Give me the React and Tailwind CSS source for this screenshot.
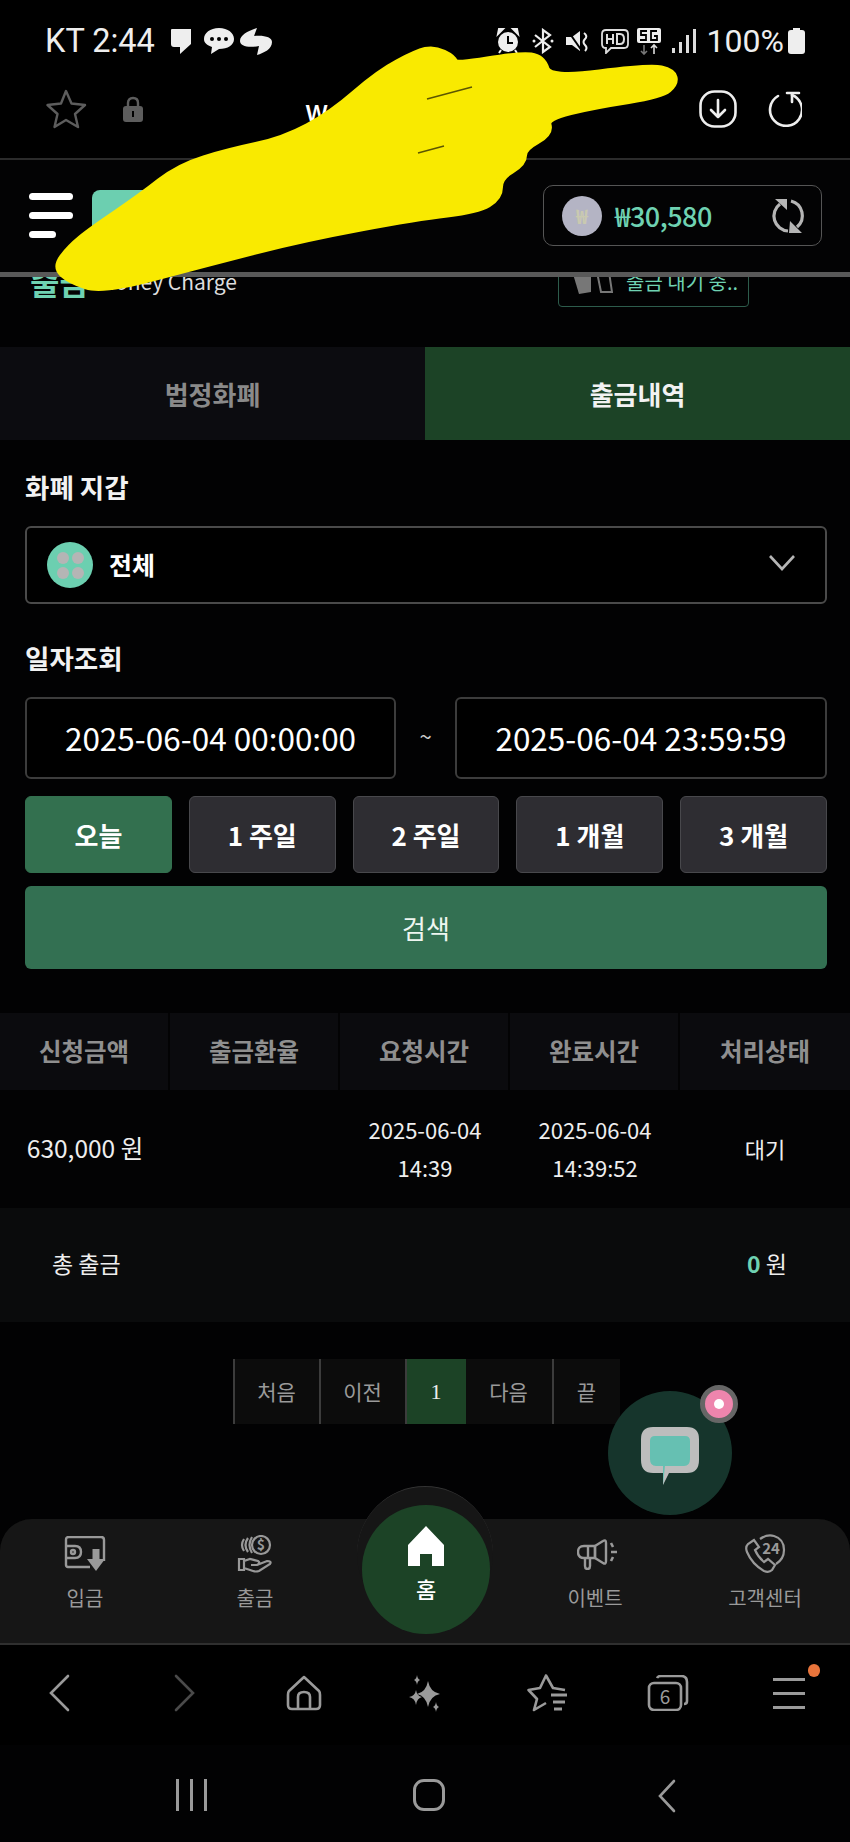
import React from 'react';

const outline = [
  [434, 49], [453, 58], [455, 66], [520, 55], [542, 58], [549, 80], [650, 67], [672, 72], [675, 83], [661, 95],
  [596, 105], [545, 117], [550, 133], [523, 148], [523, 163], [499, 177], [499, 197], [477, 210], [417, 217],
  [304, 238], [206, 263], [103, 291], [70, 280], [56, 267], [70, 248], [92, 230], [141, 197], [179, 167],
  [228, 152], [284, 140], [332, 114], [379, 73], [417, 53],
];

// rounds the marker outline off through the midpoints
const mid = (a, b) => [(a[0] + b[0]) / 2, (a[1] + b[1]) / 2];
const scribble =
  `M${mid(outline[outline.length - 1], outline[0]).join(' ')} ` +
  outline.map((p, i) => `Q${p.join(' ')} ${mid(p, outline[(i + 1) % outline.length]).join(' ')}`).join(' ') +
  ' Z';

const ranges = ['오늘', '1 주일', '2 주일', '1 개월', '3 개월'];
const columns = ['신청금액', '출금환율', '요청시간', '완료시간', '처리상태'];

function StatusIcons() {
  return (
    <div className="flex items-center">
      <svg width="24" height="26" viewBox="0 0 24 26" fill="#eee">
        <circle cx="12" cy="14" r="10" />
        <path d="M2 6 L7 1 L3 1 Z M22 6 L17 1 L21 1 Z" stroke="#eee" strokeWidth="2" />
        <path d="M12 8 V15 H17" stroke="#000" strokeWidth="2" fill="none" />
        <path d="M5 22 L3 25 M19 22 L21 25" stroke="#eee" strokeWidth="2" />
      </svg>
      <svg width="22" height="26" viewBox="0 0 22 26" className="ml-[12px]" fill="none" stroke="#eee" strokeWidth="2.2">
        <path d="M3 7 L18 19 L11 24 V2 L18 7 L3 19" />
        <circle cx="2" cy="13" r="1.5" fill="#eee" stroke="none" />
        <circle cx="20" cy="13" r="1.5" fill="#eee" stroke="none" />
      </svg>
      <svg width="24" height="26" viewBox="0 0 24 26" className="ml-[11px]" fill="#eee">
        <path d="M1 9 H7 L15 3 V23 L7 17 H1 Z" />
        <path d="M3 3 L17 23" stroke="#000" strokeWidth="2" />
        <path d="M19 5 Q23 8 20 11 Q17 14 20 17 Q23 20 20 23" stroke="#eee" strokeWidth="2" fill="none" />
      </svg>
      <svg width="28" height="26" viewBox="0 0 28 26" className="ml-[12px]" fill="none" stroke="#ddd" strokeWidth="1.8">
        <path d="M5 2 H23 Q27 2 27 6 V16 Q27 20 23 20 H10 L5 25 V20 Q1 20 1 16 V6 Q1 2 5 2 Z" />
        <path d="M6 6 V16 M12 6 V16 M6 11 H12 M16 6 V16 H19 Q23 16 23 11 Q23 6 19 6 Z" strokeWidth="2" />
      </svg>
      <div className="ml-[8px] flex w-[24px] flex-col items-center">
        <svg width="24" height="27" viewBox="0 0 24 27" fill="none">
          <rect x="0" y="0" width="24" height="15" rx="2" fill="#eee" />
          <path d="M10 3 H4 V7 H9 V12 H3 M20 3 H14 V12 H20 V8 H17" stroke="#000" strokeWidth="1.8" />
          <path d="M7 17 V26 M4 23 L7 26 L10 23" stroke="#777" strokeWidth="1.6" />
          <path d="M17 26 V17 M14 20 L17 17 L20 20" stroke="#ddd" strokeWidth="1.6" />
        </svg>
      </div>
      <svg width="24" height="26" viewBox="0 0 24 26" className="ml-[11px]" fill="#ddd">
        <rect x="0" y="20" width="3" height="5" />
        <rect x="7" y="14" width="3" height="11" />
        <rect x="14" y="7" width="3" height="18" />
        <rect x="21" y="1" width="3" height="24" />
      </svg>
      <span className="ml-[11px] text-[32px] leading-none text-[#eee]">100%</span>
      <svg width="17" height="26" viewBox="0 0 17 26" className="ml-[4px]" fill="#eee">
        <rect x="5" y="0" width="7" height="3" />
        <rect x="0" y="2" width="17" height="24" rx="3" />
      </svg>
    </div>
  );
}

function Wallet() {
  return (
    <svg width="42" height="36" viewBox="0 0 42 36" fill="none" stroke="#999" strokeWidth="2.4">
      <path d="M26 31 H4 Q2 31 2 29 V4 Q2 1 5 1 H37 Q40 1 40 4 V25" />
      <path d="M2 10 H11 Q17 10 17 16 Q17 22 11 22 H2" />
      <circle cx="9" cy="16" r="2" />
      <path d="M32 13 V24" strokeWidth="7" />
      <path d="M23 23 H41 L32 35 Z" fill="#999" stroke="none" />
    </svg>
  );
}

function CoinsHand() {
  return (
    <svg width="36" height="38" viewBox="0 0 36 38" fill="none" stroke="#999" strokeWidth="2.2">
      <circle cx="24" cy="10" r="9" />
      <path d="M15 2 Q10 10 15 18 M11 3 Q6 10 11 17 M7 4 Q3 10 7 16" />
      <text x="24" y="15" textAnchor="middle" fontSize="14" fontWeight="700" fill="#999" stroke="none">$</text>
      <path d="M2 24 H7 V35 H2 Z M7 26 L13 24 L21 26 Q24 28 20 30 H14 M20 30 L30 26 Q35 26 33 29 L22 36 Q19 37 16 36 L7 33" />
    </svg>
  );
}

function Speaker() {
  return (
    <svg width="40" height="32" viewBox="0 0 40 32" className="ml-[3px]" fill="none" stroke="#999" strokeWidth="2.4" strokeLinejoin="round">
      <path d="M18 8 L26 3 Q29 1 29 5 V23 Q29 27 26 25 L18 20 Z" />
      <path d="M18 8 H7 Q1 8 1 14 Q1 20 7 20 H18 Z" />
      <path d="M11 8 V20" />
      <path d="M8 20 V28 Q8 31 10.5 31 Q13 31 13 28 V20" />
      <path d="M34 5 L36 9 M34 14 H40 M34 23 L36 19" strokeWidth="2.6" />
    </svg>
  );
}

function Phone24() {
  return (
    <svg width="42" height="40" viewBox="0 0 42 40" fill="none" stroke="#999" strokeWidth="2.2">
      <path d="M10 6 L4 10 Q1 13 3 18 Q8 30 20 37 Q25 39 28 36 L31 31 L24 25 L20 28 Q14 23 11 16 L15 13 Z" />
      <path d="M16 5 Q23 0 30 2 Q40 5 40 16 Q40 25 32 30" />
      <text x="27" y="20" textAnchor="middle" fontSize="15" fontWeight="700" fill="#999" stroke="none">24</text>
    </svg>
  );
}

function NavItem({ icon, label }) {
  return (
    <div className="flex flex-col items-center">
      <div className="flex h-[40px] items-center">{icon}</div>
      <span className="mt-[9px] text-[20px] leading-[30px] text-[#9a9a9a]">{label}</span>
    </div>
  );
}

export default function App() {
  return (
    <div className="relative h-[1842px] w-[850px] overflow-hidden bg-[#020203] font-['Noto_Sans_CJK_KR','Noto_Sans',sans-serif] text-white">
      {/* phone status bar */}
      <div className="flex h-[56px] items-center justify-between bg-black pl-[45px] pr-[45px] pt-[26px] font-['Roboto',sans-serif]">
        <div className="flex items-center text-[32.5px] leading-[36px] text-[#eee]">
          <span>KT 2:44</span>
          <svg width="20" height="25" viewBox="0 0 20 25" className="ml-[16px]" fill="#eee">
            <path d="M1 0 H20 V15 L9 25 V18 H3 Q0 18 0 15 V1 Q0 0 1 0 Z" />
          </svg>
          <svg width="30" height="26" viewBox="0 0 30 26" className="ml-[13px]">
            <path d="M15 0 C24 0 30 5 30 11 C30 17 24 21 15 21 L7 26 L8 19 C3 17 0 15 0 11 C0 5 6 0 15 0 Z" fill="#eee" />
            <circle cx="8" cy="11" r="2" fill="#000" />
            <circle cx="15" cy="11" r="2" fill="#000" />
            <circle cx="22" cy="11" r="2" fill="#000" />
          </svg>
          <svg width="32" height="27" viewBox="0 0 32 27" className="ml-[6px]" fill="#eee">
            <path d="M17 0 L14 8 C24 7 32 9 32 14 C32 21 24 25 17 27 L19 18 C8 20 0 18 0 13 C0 7 8 3 17 0 Z" />
          </svg>
        </div>
        <StatusIcons />
      </div>

      {/* browser address bar */}
      <div className="relative flex h-[104px] items-center justify-between border-b-2 border-[#2b2b2b] bg-black pl-[46px] pr-[48px] pt-[4px]">
        <div className="flex items-center">
          <svg width="41" height="40" viewBox="0 0 41 40" fill="none" stroke="#5d5d5d" strokeWidth="2.4" strokeLinejoin="round">
            <path d="M20 2 L25.5 14.5 L39 16 L29 25 L32 38 L20 31 L8.5 38 L11.5 25 L1.5 16 L15 14.5 Z" />
          </svg>
          <svg width="20" height="26" viewBox="0 0 20 26" className="ml-[36px]" fill="#5d5d5d">
            <path d="M5 11 V7 Q5 2 10 2 Q15 2 15 7 V11" fill="none" stroke="#5d5d5d" strokeWidth="2.4" />
            <rect x="0" y="10" width="20" height="16" rx="3" />
            <rect x="9" y="15" width="2" height="6" fill="#000" />
          </svg>
          <span className="ml-[162px] text-[28px] font-medium leading-none">w</span>
        </div>
        <div className="flex items-center gap-[29px]">
          <svg width="38" height="38" viewBox="0 0 38 38" fill="none" stroke="#eee" strokeWidth="2.6" strokeLinecap="round" strokeLinejoin="round">
            <rect x="1.5" y="1.5" width="35" height="35" rx="14" />
            <path d="M19 10 V27 M12 20 L19 27 L26 20" />
          </svg>
          <svg width="36" height="36" viewBox="0 0 36 36" fill="none" stroke="#eee" strokeWidth="2.6" strokeLinecap="round" strokeLinejoin="round">
            <path d="M12 5 A16 16 0 1 0 26 4" />
            <path d="M21 2 H33 M26 2 L26 11" />
          </svg>
        </div>
      </div>

      {/* site header */}
      <div className="relative z-10 flex h-[117px] items-start justify-between border-b-[5px] border-[#595959] bg-[#030304] pl-[29px] pr-[28px] pt-[25px]">
        <div className="flex">
          <div className="mt-[8px] flex w-[44px] flex-col gap-[12px]">
            <div className="h-[7px] w-[44px] rounded-full bg-white" />
            <div className="h-[7px] w-[44px] rounded-full bg-white" />
            <div className="h-[7px] w-[27px] rounded-full bg-white" />
          </div>
          <div className="ml-[19px] mt-[5px] h-[60px] w-[60px] rounded-[8px] bg-[#6ccfb0]" />
        </div>
        <div className="flex h-[61px] w-[279px] items-center rounded-[10px] border border-[#555] pl-[18px] pr-[15px]">
          <div className="flex h-[40px] w-[40px] items-center justify-center rounded-full bg-[#b4b4c4] text-[20px] font-bold text-[#c9c9b0]">₩</div>
          <span className="ml-[13px] text-[27px] font-medium leading-none tracking-[-0.5px] text-[#6fd2b2]">₩30,580</span>
          <svg width="36" height="36" viewBox="0 0 36 36" className="ml-auto" fill="none" stroke="#b5b5b5" strokeWidth="3.2">
            <path d="M10 6 A15 15 0 0 0 18 33" />
            <path d="M21 3 A15 15 0 0 1 27 29" />
            <path d="M5 1 H17 V12 Z M19 35 H32 L20 23 Z" fill="#b5b5b5" stroke="none" />
          </svg>
        </div>
      </div>

      {/* page title, the header covers the top of it */}
      <div className="h-[70px] overflow-hidden">
        <div className="-mt-[16px] flex items-start justify-between pl-[30px] pr-[101px]">
          <div className="flex items-center leading-[40px]">
            <span className="text-[32px] font-bold text-[#6fd2b2]">출금</span>
            <span className="ml-[9px] text-[21px] text-[#ddd]">Money Charge</span>
          </div>
          <div className="-mt-[4px] flex h-[50px] w-[191px] items-center rounded-[4px] border border-[#2d5c4c] pl-[12px]">
            <svg width="42" height="24" viewBox="0 0 42 24" fill="#777">
              <path d="M2 4 L20 0 V22 L8 24 Z" />
              <path d="M26 2 H38 L41 22 H30 Z" fill="none" stroke="#777" strokeWidth="2" />
            </svg>
            <span className="ml-[13px] whitespace-nowrap text-[20px] text-[#6fd2b2]">출금 내기 중..</span>
          </div>
        </div>
      </div>

      {/* tabs */}
      <div className="grid h-[93px] grid-cols-2">
        <div className="flex items-center justify-center bg-[#0c0c10] text-[26px] font-bold text-[#8a8a8a]">법정화폐</div>
        <div className="flex items-center justify-center bg-[#1c4326] text-[26px] font-bold text-[#f2f2f2]">출금내역</div>
      </div>

      {/* filter */}
      <div className="pl-[25px] pr-[23px] pt-[32px]">
        <div className="text-[26.5px] font-bold leading-[30px] text-[#f2f2f2]">화폐 지갑</div>
        <div className="mt-[24px] flex h-[78px] items-center justify-between rounded-[6px] border-2 border-[#4a4a4a] bg-black pl-[20px] pr-[30px]">
          <div className="flex items-center">
            <div className="grid h-[46px] w-[46px] grid-cols-2 content-center justify-center gap-[3px] rounded-full bg-[#6ccfb0] px-[10px]">
              <div className="h-[12px] w-[12px] rounded-full bg-[#b5b5b5]" />
              <div className="h-[12px] w-[12px] rounded-full bg-[#b5b5b5]" />
              <div className="h-[12px] w-[12px] rounded-full bg-[#b5b5b5]" />
              <div className="h-[12px] w-[12px] rounded-full bg-[#b5b5b5]" />
            </div>
            <span className="ml-[16px] text-[25px] font-bold">전체</span>
          </div>
          <svg width="26" height="16" viewBox="0 0 26 16" fill="none" stroke="#b5b5b5" strokeWidth="2.6" className="-mt-[4px]">
            <path d="M1 1 L13 14 L25 1" />
          </svg>
        </div>

        <div className="mt-[39px] text-[26.5px] font-bold leading-[30px] text-[#f2f2f2]">일자조회</div>
        <div className="mt-[24px] flex items-center justify-between">
          <div className="flex h-[82px] w-[371px] items-center justify-center rounded-[6px] border-2 border-[#3c3c3c] bg-black text-[31.5px]">2025-06-04 00:00:00</div>
          <span className="-mt-[6px] text-[22px] text-[#ccc]">~</span>
          <div className="flex h-[82px] w-[372px] items-center justify-center rounded-[6px] border-2 border-[#3c3c3c] bg-black text-[31.5px]">2025-06-04 23:59:59</div>
        </div>

        <div className="mt-[17px] grid grid-cols-5 gap-[17px]">
          {ranges.map((r, i) => (
            <div
              key={r}
              className={`flex h-[77px] items-center justify-center rounded-[6px] border text-[26px] font-bold ${
                i === 0 ? 'border-[#33704f] bg-[#33704f]' : 'border-[#48484c] bg-[#2e2d32]'
              }`}
            >
              {r}
            </div>
          ))}
        </div>

        <div className="mt-[13px] flex h-[83px] items-center justify-center rounded-[6px] bg-[#337052] text-[26px] text-[#eef5f0]">검색</div>
      </div>

      {/* history table */}
      <div className="mt-[44px]">
        <div className="grid h-[77px] grid-cols-5 divide-x-2 divide-[#030304] bg-[#0b0b0e]">
          {columns.map((c) => (
            <div key={c} className="flex items-center justify-center text-[24.5px] font-bold text-[#8f8f8f]">{c}</div>
          ))}
        </div>
        <div className="grid h-[118px] grid-cols-5 items-center bg-[#030304] pb-[2px] text-center text-[22px] leading-[38px] text-[#eee]">
          <div className="text-[24.5px]">630,000 원</div>
          <div />
          <div>2025-06-04<br />14:39</div>
          <div>2025-06-04<br />14:39:52</div>
          <div>대기</div>
        </div>
        <div className="flex h-[114px] items-center justify-between bg-[#0a0b0c] pb-[3px] pl-[52px] pr-[63px] text-[23px] text-[#eee]">
          <span>총 출금</span>
          <span><span className="font-bold text-[#6fd2b2]">0</span> 원</span>
        </div>
      </div>

      {/* pagination */}
      <div className="mt-[37px] flex h-[65px] justify-center pl-[2px] text-[21px] text-[#9a9a9a]">
        <div className="flex w-[86px] items-center justify-center border-l-2 border-[#3c3c3c] bg-[#0c0c0c]">처음</div>
        <div className="flex w-[86px] items-center justify-center border-l-2 border-[#3c3c3c] bg-[#0c0c0c]">이전</div>
        <div className="flex w-[61px] items-center justify-center border-l-2 border-[#3c3c3c] bg-[#1c4326] font-['Liberation_Serif',serif] text-[22px] text-[#eee]">1</div>
        <div className="flex w-[86px] items-center justify-center bg-[#0c0c0c]">다음</div>
        <div className="flex w-[68px] items-center justify-center border-l-2 border-[#3c3c3c] bg-[#0c0c0c]">끝</div>
      </div>

      {/* floating chat */}
      <div className="absolute left-[608px] top-[1391px] z-10 flex h-[124px] w-[124px] items-center justify-center rounded-full bg-[#16352c]">
        <svg width="58" height="58" viewBox="0 0 58 58" className="mt-[6px]">
          <path d="M12 0 H46 Q58 0 58 12 V33 Q58 46 46 46 H28 L22 58 V46 H12 Q0 46 0 33 V12 Q0 0 12 0 Z" fill="#bdbdbd" />
          <path d="M14 9 H44 Q49 9 49 14 V32 Q49 39 43 39 H24 L22 58 L22 39 H15 Q9 39 9 32 V14 Q9 9 14 9 Z" fill="#66c0b2" />
        </svg>
        <div className="absolute right-[-6px] top-[-6px] flex h-[38px] w-[38px] items-center justify-center rounded-full border-[5px] border-[#666] bg-[#ee85ad]">
          <div className="h-[10px] w-[10px] rounded-full bg-white" />
        </div>
      </div>

      {/* site bottom nav */}
      <div className="relative mt-[95px] h-[126px] rounded-t-[32px] border-b-2 border-[#2f2f2f] bg-[#161616]">
        <div className="absolute left-[357px] top-[-33px] h-[136px] w-[136px] rounded-full border-t border-[#333] bg-[#161616]" />
        <div className="relative grid h-full grid-cols-5 pt-[15px]">
          <NavItem icon={<Wallet />} label="입금" />
          <NavItem icon={<CoinsHand />} label="출금" />
          <div />
          <NavItem icon={<Speaker />} label="이벤트" />
          <NavItem icon={<Phone24 />} label="고객센터" />
        </div>
        <div className="absolute left-[362px] top-[-14px] flex h-[129px] w-[128px] flex-col items-center rounded-full bg-[#1c4326] pt-[21px]">
          <svg width="36" height="40" viewBox="0 0 36 40" fill="#fff">
            <path d="M18 0 L36 19 V40 H24 V28 H12 V40 H0 V19 Z" />
          </svg>
          <span className="mt-[8px] text-[22px] font-medium leading-[28px]">홈</span>
        </div>
      </div>

      {/* browser toolbar */}
      <div className="grid h-[100px] grid-cols-7 items-center bg-black pb-[6px] pt-[2px]">
        <div className="flex justify-center pr-[4px]">
          <svg width="22" height="38" viewBox="0 0 22 38" fill="none" stroke="#9a9a9a" strokeWidth="2.6" strokeLinecap="round"><path d="M20 2 L3 19 L20 36" /></svg>
        </div>
        <div className="flex justify-center pl-[6px]">
          <svg width="22" height="38" viewBox="0 0 22 38" fill="none" stroke="#4a4a4a" strokeWidth="2.6" strokeLinecap="round"><path d="M2 2 L19 19 L2 36" /></svg>
        </div>
        <div className="flex justify-center">
          <svg width="36" height="36" viewBox="0 0 36 36" fill="none" stroke="#9a9a9a" strokeWidth="2.6" strokeLinejoin="round">
            <path d="M18 2 L33 16 Q34 17 34 20 V30 Q34 34 30 34 H6 Q2 34 2 30 V20 Q2 17 3 16 Z" />
            <path d="M12 34 V22 Q12 17 18 17 Q24 17 24 22 V34" />
          </svg>
        </div>
        <div className="flex justify-center">
          <svg width="34" height="37" viewBox="0 0 34 37" fill="#9a9a9a">
            <path d="M20 6 Q22 17 32 19 Q22 21 20 32 Q18 21 9 19 Q18 17 20 6 Z" />
            <path d="M8 15 Q9 21 14 22 Q9 23 8 30 Q7 23 1 22 Q7 21 8 15 Z" />
            <path d="M9 0 Q9.5 4 12 5 Q9.5 6 9 10 Q8.5 6 6 5 Q8.5 4 9 0 Z" />
            <path d="M28 27 Q28.5 31 31 32 Q28.5 33 28 37 Q27.5 33 25 32 Q27.5 31 28 27 Z" />
          </svg>
        </div>
        <div className="flex justify-center pl-[2px]">
          <svg width="40" height="38" viewBox="0 0 40 38" fill="none" stroke="#9a9a9a" strokeWidth="2.6" strokeLinejoin="round">
            <path d="M38 16 L26 14 L19 1.5 L13 14 L1.5 16 L10 25 L7 36 L19 29" />
            <path d="M24 21 H40 M26 28 H38 M27 35 H35" strokeWidth="3" />
          </svg>
        </div>
        <div className="flex justify-center">
          <svg width="42" height="36" viewBox="0 0 42 36" fill="none" stroke="#9a9a9a" strokeWidth="2.6">
            <rect x="2" y="8" width="32" height="27" rx="5" />
            <path d="M10 3 Q11 1 14 1 H34 Q40 1 40 7 V26 Q40 29 37 29" />
            <text x="18" y="29" textAnchor="middle" fontSize="19" fill="#9a9a9a" stroke="none">6</text>
          </svg>
        </div>
        <div className="relative flex justify-center">
          <div className="flex w-[32px] flex-col gap-[11px]">
            <div className="h-[3px] bg-[#9a9a9a]" />
            <div className="h-[3px] bg-[#9a9a9a]" />
            <div className="h-[3px] bg-[#9a9a9a]" />
          </div>
          <div className="absolute right-[30px] top-[-14px] h-[13px] w-[12px] rounded-full bg-[#e8743b]" />
        </div>
      </div>

      {/* phone nav keys */}
      <div className="grid grid-cols-3 pl-[72px] pr-[64px] pt-[34px]">
        <div className="flex justify-center gap-[11px]">
          <div className="h-[32px] w-[3px] bg-[#9a9a9a]" />
          <div className="h-[32px] w-[3px] bg-[#9a9a9a]" />
          <div className="h-[32px] w-[3px] bg-[#9a9a9a]" />
        </div>
        <div className="flex justify-center">
          <div className="h-[32px] w-[32px] rounded-[11px] border-[3px] border-[#9a9a9a]" />
        </div>
        <div className="flex justify-center">
          <svg width="18" height="34" viewBox="0 0 18 34" fill="none" stroke="#9a9a9a" strokeWidth="2.6" strokeLinecap="round"><path d="M16 2 L2 17 L16 32" /></svg>
        </div>
      </div>

      {/* yellow marker scribble over the screenshot */}
      <svg className="absolute left-0 top-0 z-20" width="700" height="300" viewBox="0 0 700 300">
        <path d={scribble} fill="#f9ea00" stroke="#f9ea00" strokeWidth="8" strokeLinejoin="round" />
        <path d="M427 99 L472 87 M418 153 L444 146" stroke="#5b5500" strokeWidth="1.5" />
      </svg>
    </div>
  );
}
